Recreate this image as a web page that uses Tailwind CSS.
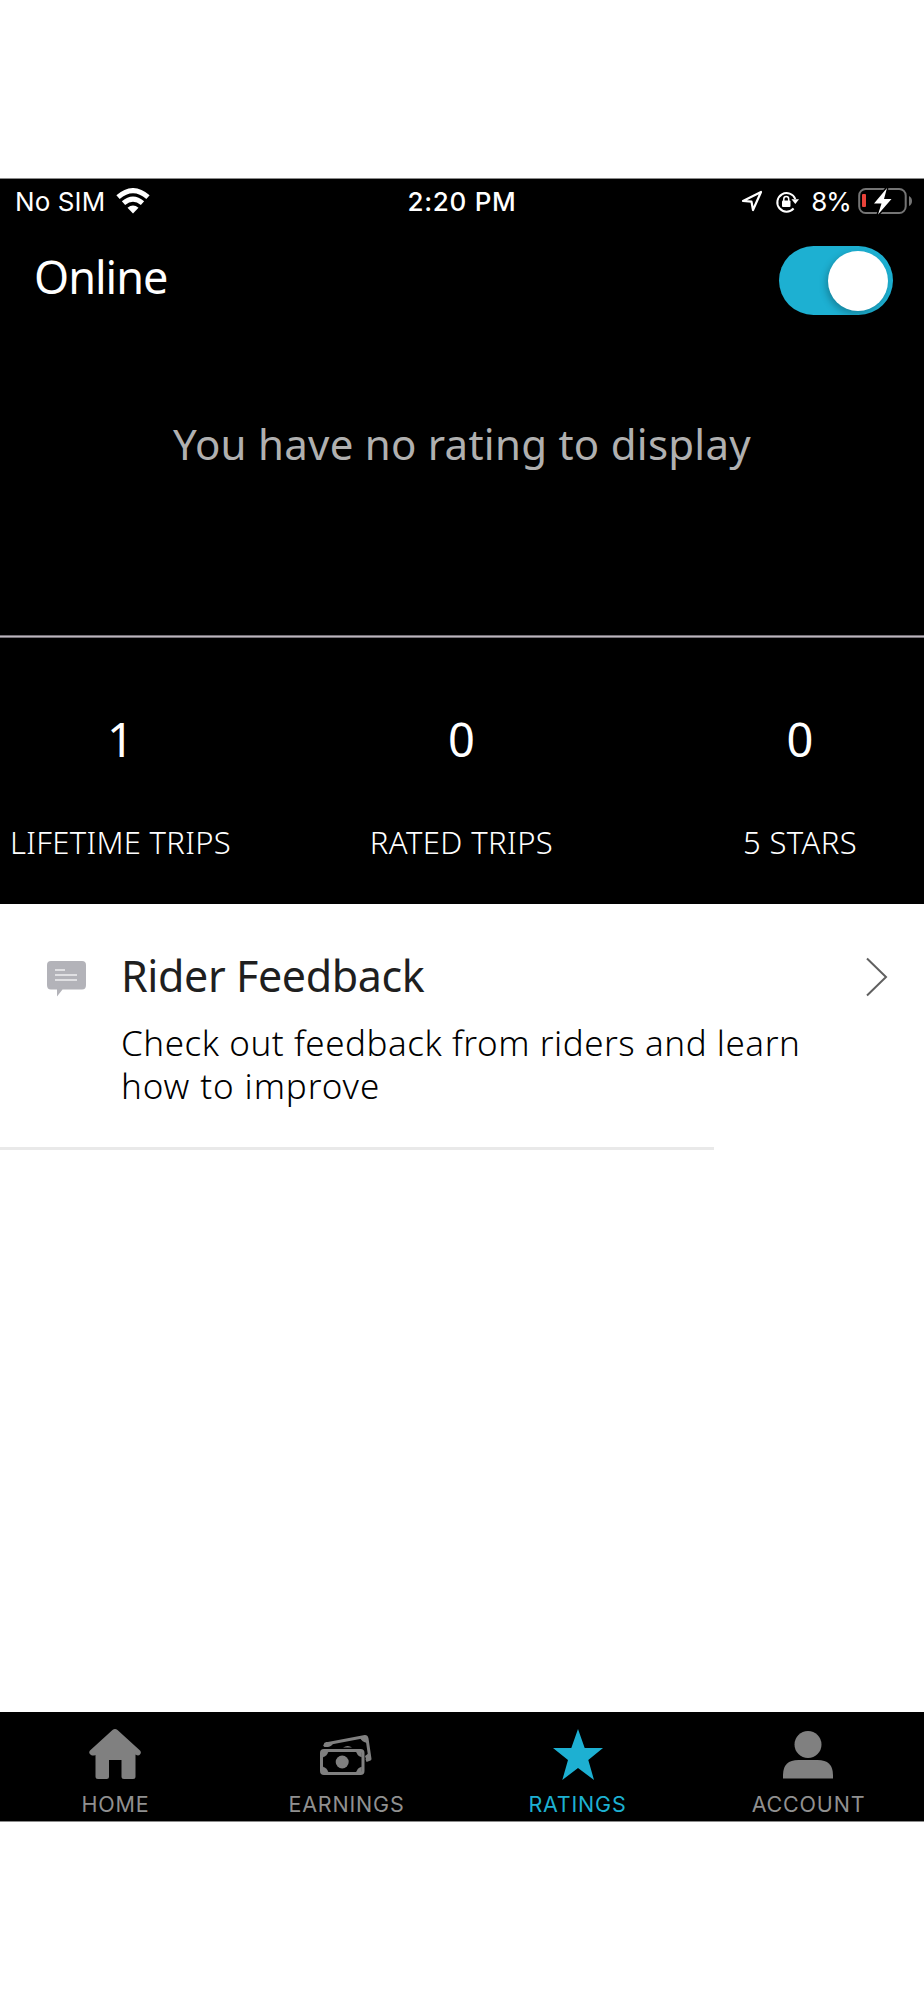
<!DOCTYPE html>
<html lang="en">
<head>
<meta charset="utf-8">
<title>Ratings</title>
<script src="https://cdn.jsdelivr.net/npm/@tailwindcss/browser@4"></script>
</head>
<body class="bg-white">
<div class="flex h-[2000px] w-[924px] flex-col overflow-hidden bg-white pt-[178px] font-['Noto_Sans','Open_Sans',sans-serif] whitespace-nowrap">
  <div class="h-[726px] shrink-0 border-t border-[#8a8a8a] bg-black text-white">
    <!-- Status bar -->
    <header class="grid h-[46px] grid-cols-3 items-center font-['Inter',sans-serif] text-[26px] leading-[46px]">
      <div class="flex items-center gap-[11px] pl-[15px]">
        <span class="tracking-[0.1px]">No SIM</span>
        <svg class="-mt-[3px] h-[26px] w-[34px]" viewBox="0 0 34 26" fill="none" stroke="#fff" stroke-width="5">
          <path d="M2 9.200Q17-4 32 9.200"/><path d="M7.500 15.200Q17 7 26.500 15.200"/><path d="M17 25.500L11.500 19.800Q17 15 22.500 19.800Z" fill="#fff" stroke="none"/>
        </svg>
      </div>
      <div class="text-center font-medium tracking-[0.7px]">2:20 PM</div>
      <div class="flex items-center justify-end pr-[11px]">
        <svg class="-mt-0.5 h-[22px] w-[22px]" viewBox="0 0 22 22" fill="none" stroke="#fff" stroke-width="2.200" stroke-linejoin="round"><path d="M2 11L20 2L12 20L10.500 11.700Z"/></svg>
        <svg class="ml-[12px] h-[24px] w-[25px]" viewBox="0 0 25 24" fill="none" stroke="#fff" stroke-width="2">
          <path d="M18.600 18.500A9.300 9.300 0 1 1 20.300 9"/><path d="M16.500 9.300H24L20.300 14Z" fill="#fff" stroke="none"/><rect x="7" y="10.500" width="8.500" height="6.500" rx="1" fill="#fff" stroke="none"/><path d="M8.800 11V9Q8.800 6.500 11.250 6.500Q13.700 6.500 13.700 9V11" stroke-width="1.500"/>
        </svg>
        <span class="ml-[11px] tracking-[-0.9px]">8%</span>
        <svg class="-mt-[3px] ml-[7px] h-[28px] w-[55px]" viewBox="0 0 55 28">
          <rect x="1.200" y="2" width="46.500" height="24" rx="6.500" fill="none" stroke="#757575" stroke-width="2"/><path d="M51 9Q54 10.500 54 14Q54 17.500 51 19Z" fill="#757575"/>
          <rect x="4" y="7" width="4" height="13" rx="1" fill="#e8433a"/><path d="M29 1L16 16.500H23.500L20 27.500L33.500 12H26Z" fill="#fff" stroke="#000" stroke-width="3" paint-order="stroke"/>
        </svg>
      </div>
    </header>

    <!-- Online switch -->
    <div class="flex h-[105px] items-start justify-between pt-[21px] pr-[31px] pl-[34px]">
      <h1 class="mt-px text-[45px] leading-[60px] tracking-[-1px]">Online</h1>
      <div class="flex h-[69px] w-[114px] items-center justify-end rounded-full bg-[#1db0d2] pr-[5px]">
        <div class="size-[60px] rounded-full bg-white shadow-[-2px_3px_7px_rgba(0,0,0,0.25)]"></div>
      </div>
    </div>

    <div class="flex h-[305px] items-start justify-center pt-[84px] text-[42px] leading-[60px] tracking-[0.26px] text-[#b0b0b0]">You have no rating to display</div>

    <div class="h-[3px] border-y border-[#746f76] bg-[#bcb6be]"></div>

    <!-- Trip statistics -->
    <section class="flex pt-[71px] text-center">
      <div class="w-[241px]"><div class="text-[47px] leading-[60px]">1</div><div class="mt-[53px] text-[31px] leading-[40px] font-light tracking-[0.3px]">LIFETIME TRIPS</div></div>
      <div class="w-[441px]"><div class="text-[47px] leading-[60px]">0</div><div class="mt-[53px] text-[31px] leading-[40px] font-light tracking-[0.4px]">RATED TRIPS</div></div>
      <div class="w-[236px]"><div class="text-[47px] leading-[60px]">0</div><div class="mt-[53px] text-[31px] leading-[40px] font-light tracking-[0.4px]">5 STARS</div></div>
    </section>
  </div>

  <!-- Rider feedback -->
  <section class="flex h-[243px] shrink-0 items-start">
    <svg class="mt-[57px] ml-[47px] h-[36px] w-[39px]" viewBox="0 0 39 36"><path d="M4 0H35Q39 0 39 4V24Q39 28.500 35 28.500H15.500L10 35.500V28.500H4Q0 28.500 0 24V4Q0 0 4 0Z" fill="#b3b3b9"/><path d="M8 9H18M8 14H30M8 19H30" stroke="#efeff1" stroke-width="1.600"/></svg>
    <div class="ml-[35px] w-[739px] pt-[42px]">
      <h2 class="text-[43px] leading-[60px] tracking-[-0.4px] text-[#1f1f1f]">Rider Feedback</h2>
      <p class="mt-[16px] text-[35px] leading-[42.500px] font-light tracking-[0.54px] text-black">Check out feedback from riders and learn<br><span class="tracking-[0.9px]">how to improve</span></p>
    </div>
    <svg class="mt-[53px] ml-[6px] h-[40px] w-[22px]" viewBox="0 0 22 40" fill="none" stroke="#606060" stroke-width="2"><path d="M1 1.500L20 20L1 38.500"/></svg>
  </section>
  <div class="h-[3px] w-[714px] shrink-0 bg-[#e9e9e9]"></div>
  <div class="h-[562px] shrink-0"></div>

  <!-- Tab bar -->
  <nav class="grid h-[110px] shrink-0 grid-cols-4 border-b border-[#8a8a8a] bg-black pt-[16px] text-center font-['Inter',sans-serif] text-[21.500px] leading-[28px] text-[#909090]">
    <div class="flex flex-col items-center">
      <svg class="mr-px h-[53px] w-[52px]" viewBox="0 0 52 53" fill="#808080"><path d="M23.500 2Q26 0 28.500 2L51 22.500Q53 25 50.500 27Q49 28 46.500 26.500V48.500Q46.500 51 44 51H35Q32.500 51 32.500 48.500V32H20V48.500Q20 51 17.500 51H9Q6.500 51 6.500 48.500V27Q4 28 2 27Q-1 25 1 22.500Z"/></svg>
      <span class="mt-[9px] tracking-[0.8px]">HOME</span>
    </div>
    <div class="flex flex-col items-center">
      <svg class="mr-px h-[53px] w-[52px]" viewBox="0 0 52 53" fill="none" stroke="#808080"><rect x="1.500" y="22.500" width="41.500" height="23" rx="2.500" stroke-width="3"/><circle cx="22.200" cy="34" r="6.500" fill="#808080" stroke="none"/><path d="M3 24H8Q7 28 3 29ZM41.500 24H36.500Q37.500 28 41.500 29ZM3 44H8Q7 40 3 39ZM41.500 44H36.500Q37.500 40 41.500 39Z" fill="#808080" stroke-width=".5"/><path d="M4.500 18.500L5.500 16L45 8.500Q46.500 8.500 47 10.500L50 31L46 32.500" stroke-width="3" stroke-linejoin="round"/><path d="M40 10L46 9.500L47 15Q42 14 40 10ZM45 28L49 25V31H46ZM4 19L6 14L14 14Q12 18.500 8 19Z" fill="#808080" stroke="none"/><path d="M23 19.500Q28 16.500 32 19.500Z" fill="#808080" stroke="none"/></svg>
      <span class="mt-[9px] tracking-[0.8px]">EARNINGS</span>
    </div>
    <div class="flex flex-col items-center text-[#1db0d2]">
      <svg class="h-[53px] w-[52px]" viewBox="0 0 52 53" fill="#1db0d2"><path d="M26 1L32.700 20H51L36.300 32L42 52L26 40L10.300 52L16 32L1 20H19.300Z"/></svg>
      <span class="mt-[9px] tracking-[0.8px]">RATINGS</span>
    </div>
    <div class="flex flex-col items-center">
      <svg class="mr-px h-[53px] w-[52px]" viewBox="0 0 52 53" fill="#808080"><circle cx="26" cy="16.500" r="13.500"/><path d="M1 50.500V47Q1 32 16.500 32H35.500Q51 32 51 47V50.500Z"/></svg>
      <span class="mt-[9px] tracking-[0.8px]">ACCOUNT</span>
    </div>
  </nav>
</div>
</body>
</html>
